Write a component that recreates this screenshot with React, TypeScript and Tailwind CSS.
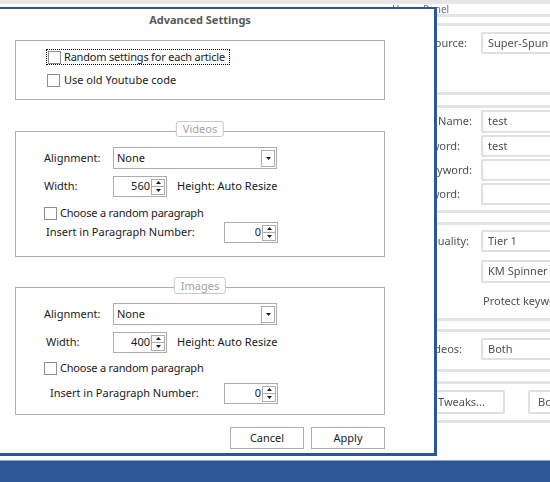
import React from 'react';

function Tri({ dir }: { dir: 'up' | 'down' }) {
  return (
    <svg width="5" height="3" viewBox="0 0 5 3" className="block">
      <path d={dir === 'up' ? 'M2.5 0L5 3H0z' : 'M0 0h5L2.5 3z'} fill="#1a1a1a" />
    </svg>
  );
}

function Check() {
  return <span className="block w-[13px] h-[13px] border border-[#8e8e8e] bg-white shrink-0" />;
}

function Select() {
  return (
    <div className="flex items-center w-[164px] h-[22px] border border-[#acacac] bg-white pl-[3px] pr-[1px]">
      <span className="flex-1">None</span>
      <span className="w-[14px] h-[17px] border border-[#acacac] flex items-center justify-center">
        <Tri dir="down" />
      </span>
    </div>
  );
}

function Spin({ value }: { value: string }) {
  return (
    <div className="flex items-center w-[54px] h-[21px] border border-[#acacac] bg-white">
      <span className="flex-1 text-right pr-[1px]">{value}</span>
      <div className="flex flex-col w-[14px] mr-[1px]">
        <span className="h-[8px] border border-[#acacac] flex items-center justify-center">
          <Tri dir="up" />
        </span>
        <span className="h-[8px] border border-t-0 border-[#acacac] flex items-center justify-center">
          <Tri dir="down" />
        </span>
      </div>
    </div>
  );
}

function Field({ label, end, value, cls }: { label?: string; end: string; value?: string; cls: string }) {
  return (
    <div className={`flex ml-[370px] w-[220px] ${cls}`}>
      <div className={`w-[111px] shrink-0 flex items-center justify-end whitespace-nowrap ${end}`}>{label}</div>
      <div className="w-[100px] shrink-0 border-2 border-[#e0e0e0] rounded-[2px] bg-white flex items-center pl-[5px] whitespace-nowrap">
        {value}
      </div>
    </div>
  );
}

function Line({ cls }: { cls: string }) {
  return <div className={`ml-[380px] h-[3px] bg-[#e4e4e4] ${cls}`} />;
}

export default function App() {
  return (
    <div className="w-[550px] h-[482px] overflow-hidden bg-white flex flex-col font-['Noto_Sans',sans-serif] text-[11px] text-[#1a1a1a]">
      <div className="relative h-[460px]">
        {/* window behind */}
        <div className="flex flex-col blur-[0.7px] text-[#505050] text-[11px] w-[600px]">
          <div className="h-[4px] bg-[#e6e6e6]" />
          <div className="h-[10px] pl-[392px] text-[10px] leading-[10px] text-[#7d6b8e]">Home Panel</div>
          <Line cls="mt-0" />
          <Line cls="mt-[6px]" />
          <Field label="Article Source:" end="pr-[14px]" value="Super-Spun Articles" cls="mt-[6px] h-[22px]" />
          <Line cls="mt-[38px]" />
          <Line cls="mt-[10px]" />
          <Field label="User Name:" end="pr-[9px]" value="test" cls="mt-[2px] h-[23px]" />
          <Field label="Password:" end="pr-[21px]" value="test" cls="mt-[2px] h-[22px]" />
          <Field label="Main Keyword:" end="pr-[9px]" cls="mt-[2px] h-[22px]" />
          <Field label="Keyword:" end="pr-[21px]" cls="mt-[2px] h-[22px]" />
          <Line cls="mt-[5px]" />
          <Line cls="mt-[9px]" />
          <Field label="Spin Quality:" end="pr-[12px]" value="Tier 1" cls="mt-[5px] h-[22px]" />
          <Field end="pr-[12px]" value="KM Spinner" cls="mt-[8px] h-[23px]" />
          <div className="mt-[12px] h-[12px] pl-[483px] leading-[12px] whitespace-nowrap">Protect keywords</div>
          <Line cls="mt-[11px]" />
          <Line cls="mt-[8px]" />
          <Field label="Videos:" end="pr-[19px]" value="Both" cls="mt-[6px] h-[22px]" />
          <Line cls="mt-[9px]" />
          <Line cls="mt-[9px]" />
          <div className="mt-[6px] h-[24px] flex ml-[400px] gap-[23px]">
            <div className="w-[105px] shrink-0 border-2 border-[#e0e0e0] rounded-[2px] flex items-center pl-[36px]">Tweaks...</div>
            <div className="w-[80px] shrink-0 border-2 border-[#e0e0e0] rounded-[2px] flex items-center pl-[8px]">Both</div>
          </div>
          <Line cls="mt-[6px]" />
        </div>

        {/* dialog */}
        <div className="absolute left-[-2px] top-[7px] w-[439px] h-[449px] border-2 border-r-[3px] border-b-[3px] border-[#2b579a] bg-white">
          <div className="flex flex-col pl-[15px] w-[385px]">
            <div className="pt-[3px] h-[19px] text-center font-bold text-[#595959] leading-[16px]">Advanced Settings</div>

            <div className="mt-[12px] h-[60px] w-[370px] border border-[#adadad] flex flex-col">
              <div className="mt-[8px] ml-[30px] self-start flex items-center gap-[3px] h-[16px] pl-[1px] pr-[4px] border border-dotted border-black">
                <Check />
                <span className="leading-[14px] tracking-[-0.2px]">Random settings for each article</span>
              </div>
              <div className="mt-[7px] ml-[31px] flex items-center gap-[4px] h-[16px]">
                <Check />
                <span>Use old Youtube code</span>
              </div>
            </div>

            <div className="relative mt-[31px] h-[126px] w-[370px] border border-[#adadad] flex flex-col pl-[28px]">
              <div className="absolute left-1/2 -translate-x-1/2 top-[-11px] h-[16px] px-[6px] border border-[#c9c9c9] rounded-[3px] bg-white text-[#a3a3a3] leading-[14px]">
                Videos
              </div>
              <div className="mt-[15px] flex items-center">
                <span className="w-[69px]">Alignment:</span>
                <Select />
              </div>
              <div className="mt-[7px] flex items-center">
                <span className="w-[69px]">Width:</span>
                <Spin value="560" />
                <span className="ml-[10px]">Height: Auto Resize</span>
              </div>
              <div className="mt-[10px] flex items-center gap-[3px] h-[13px]">
                <Check />
                <span className="tracking-[-0.2px]">Choose a random paragraph</span>
              </div>
              <div className="mt-[2px] flex items-center">
                <span className="w-[180px] pl-[2px]">Insert in Paragraph Number:</span>
                <Spin value="0" />
              </div>
            </div>

            <div className="relative mt-[30px] h-[128px] w-[370px] border border-[#adadad] flex flex-col pl-[28px]">
              <div className="absolute left-1/2 -translate-x-1/2 top-[-11px] h-[17px] px-[6px] border border-[#c9c9c9] rounded-[3px] bg-white text-[#a3a3a3] leading-[15px]">
                Images
              </div>
              <div className="mt-[15px] flex items-center">
                <span className="w-[69px]">Alignment:</span>
                <Select />
              </div>
              <div className="mt-[7px] flex items-center">
                <span className="w-[69px] pl-[2px]">Width:</span>
                <Spin value="400" />
                <span className="ml-[10px]">Height: Auto Resize</span>
              </div>
              <div className="mt-[9px] flex items-center gap-[3px] h-[13px]">
                <Check />
                <span className="tracking-[-0.2px]">Choose a random paragraph</span>
              </div>
              <div className="mt-[8px] flex items-center">
                <span className="w-[180px] pl-[6px]">Insert in Paragraph Number:</span>
                <Spin value="0" />
              </div>
            </div>

            <div className="mt-[12px] flex justify-end gap-[7px] w-[370px]">
              <button className="w-[74px] h-[22px] border border-[#acacac] bg-white">Cancel</button>
              <button className="w-[74px] h-[22px] border border-[#acacac] bg-white">Apply</button>
            </div>
          </div>
        </div>
      </div>
      <div className="h-[22px] border-t border-[#8aa4cc] bg-[#2b5797]" />
    </div>
  );
}
